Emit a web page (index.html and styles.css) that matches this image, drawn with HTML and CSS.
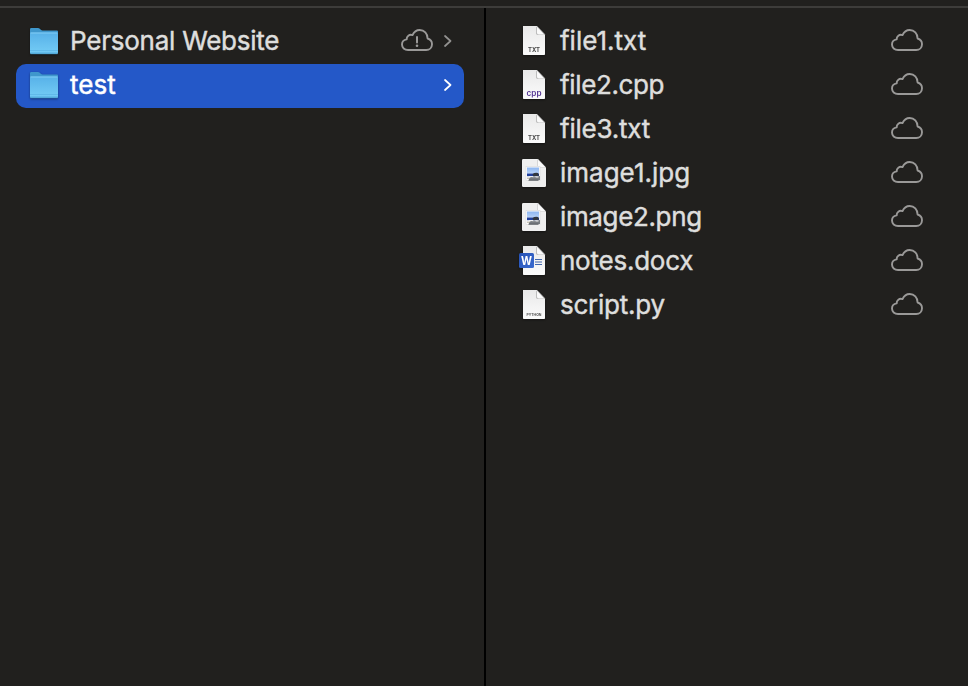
FILE: index.html
```
<!DOCTYPE html>
<html lang="en">
<head>
<meta charset="utf-8">
<title>Files</title>
<link rel="stylesheet" href="styles.css">
</head>
<body>
<svg class="defs" width="0" height="0" aria-hidden="true">
  <defs>
    <linearGradient id="paper" x1="0" y1="0" x2="0" y2="1"><stop offset="0" stop-color="#e9e9e9"/><stop offset="1" stop-color="#fbfbfb"/></linearGradient>
    <linearGradient id="front" x1="0" y1="0" x2="0" y2="1"><stop offset="0" stop-color="#57b1e8"/><stop offset="1" stop-color="#75cdf6"/></linearGradient>
    <linearGradient id="sky" x1="0" y1="0" x2="0" y2="1"><stop offset="0" stop-color="#8db6f0"/><stop offset="1" stop-color="#b7d2f8"/></linearGradient>
    <linearGradient id="word" x1="0" y1="0" x2="1" y2="1"><stop offset="0" stop-color="#2551b4"/><stop offset="1" stop-color="#3b6bd0"/></linearGradient>
    <symbol id="folder" viewBox="0 0 30 44">
      <path d="M1 33V9.200Q1 8 2.200 8H9q1 0 1.800.8l1 1q.8.800 1.800.800H28q1 0 1 1V33z" fill="#3f97cc"/>
      <path d="M1 13.700q0-1.200 1.200-1.200h25.600q1.200 0 1.200 1.200v19q0 1.300-1.200 1.300H2.200Q1 34 1 32.700z" fill="url(#front)"/>
      <path d="M1.500 13h27" stroke="#82cdf5" stroke-width="1"/>
      <path d="M1 30.500h28M1 32.500h28" stroke="#58aee0" stroke-width=".6"/>
      <path d="M1.500 33.800h27" stroke="#348abd" stroke-width=".7"/>
    </symbol>
    <symbol id="page" viewBox="0 0 30 44">
      <path d="M4 6H18l8 8.500V34.200q0 .8-.8.800H4.800Q4 35 4 34.200z" fill="url(#paper)"/>
      <path d="M17 6.500l8.500 8.500h-6.800q-1.700 0-1.700-1.700z" fill="#bdbdbd"/>
      <path d="M18 7l7.500 7.500h-5.700q-1.800 0-1.800-1.800z" fill="#fafafa"/>
      <path d="M18 6l8 8.500" stroke="#777" stroke-width=".8"/>
    </symbol>
    <symbol id="picture" viewBox="0 0 30 44">
      <path d="M4.200 7H19l8 8.500V33.800q0 1.200-1.200 1.200H4.200Q3 35 3 33.800V8.200Q3 7 4.200 7z" fill="#efefef"/>
      <path d="M18.500 7l8.500 8.500h-6.800q-1.700 0-1.700-1.700z" fill="#bdbdbd"/>
      <path d="M19 7.800l7.500 7.500h-5.700q-1.800 0-1.800-1.800z" fill="#fafafa"/>
      <rect x="7" y="14.500" width="14" height="14" fill="#fff" stroke="#d7d7d7" stroke-width=".6"/>
      <rect x="8" y="15.500" width="12" height="6" fill="url(#sky)"/>
      <path d="M8 21.500h12v2.700H8z" fill="#20409c"/>
      <path d="M8 25.500h12V27H8z" fill="#c9c5b8"/>
      <path d="M13.500 22.300q2-2 5.500-1.300l1 2.500-5.500 1z" fill="#30363e"/>
      <path d="M10 27q1-2.500 3-2t3 0 5-1v4H10z" fill="#777b80"/>
      <path d="M10 24.600h4M16.500 25h3" stroke="#f0f0f0" stroke-width="1"/>
      <path d="M9.500 28.200h10" stroke="#50545b" stroke-width="1"/>
    </symbol>
    <symbol id="cloud" viewBox="0 0 32 22">
      <path d="M7 21C3.500 21 1 18.700 1 15.600C1 12.800 3 10.800 5.700 10.400C5.400 7.300 8.400 4.900 11.500 6.100C12.900 2.900 15.500 1 18.700 1C23.200 1 26.600 4.600 26.600 9.500C29.300 10.300 31 12.500 31 15.200C31 18.500 28.500 21 25.200 21Z" fill="none" stroke="currentColor" stroke-width="1.900" stroke-linejoin="round"/>
    </symbol>
    <symbol id="chevron" viewBox="0 0 8 14"><path d="M1 2l5.500 5L1 12" fill="none" stroke="currentColor" stroke-width="1.700" stroke-linecap="round" stroke-linejoin="round"/></symbol>
  </defs>
</svg>
<div class="topbar"></div>
<main class="browser">
  <ul class="column folders">
    <li class="row">
      <svg class="icon"><use href="#folder"/></svg>
      <span class="name">Personal Website</span>
      <svg class="cloud" viewBox="0 0 32 22"><use href="#cloud"/><path d="M16 8v5.500" stroke="currentColor" stroke-width="2" stroke-linecap="round"/><circle cx="16" cy="16.800" r="1.300" fill="currentColor"/></svg>
      <svg class="chevron"><use href="#chevron"/></svg>
    </li>
    <li class="row selected">
      <svg class="icon"><use href="#folder"/></svg>
      <span class="name normal">test</span>
      <svg class="chevron"><use href="#chevron"/></svg>
    </li>
  </ul>
  <ul class="column files">
    <li class="row"><svg class="icon" viewBox="0 0 30 44"><use href="#page"/><text class="tag txt" x="15" y="32" textLength="12" lengthAdjust="spacingAndGlyphs">TXT</text></svg><span class="name normal">file1.txt</span><svg class="cloud"><use href="#cloud"/></svg></li>
    <li class="row"><svg class="icon" viewBox="0 0 30 44"><use href="#page"/><text class="tag cpp" x="15" y="31.500" textLength="15" lengthAdjust="spacingAndGlyphs">cpp</text></svg><span class="name tight">file2.cpp</span><svg class="cloud"><use href="#cloud"/></svg></li>
    <li class="row"><svg class="icon" viewBox="0 0 30 44"><use href="#page"/><text class="tag txt" x="15" y="32" textLength="12" lengthAdjust="spacingAndGlyphs">TXT</text></svg><span class="name">file3.txt</span><svg class="cloud"><use href="#cloud"/></svg></li>
    <li class="row"><svg class="icon"><use href="#picture"/></svg><span class="name normal">image1.jpg</span><svg class="cloud"><use href="#cloud"/></svg></li>
    <li class="row"><svg class="icon"><use href="#picture"/></svg><span class="name tight">image2.png</span><svg class="cloud"><use href="#cloud"/></svg></li>
    <li class="row"><svg class="icon" viewBox="0 0 30 44"><use href="#page"/><path d="M16 19.500h7M16 22h7M16 24.500h7" stroke="#4267ad" stroke-width="1"/><rect x="0" y="13" width="15" height="15" rx="1.500" fill="url(#word)"/><text class="tag word" x="7.500" y="24.800" textLength="11" lengthAdjust="spacingAndGlyphs">W</text></svg><span class="name">notes.docx</span><svg class="cloud"><use href="#cloud"/></svg></li>
    <li class="row"><svg class="icon" viewBox="0 0 30 44"><use href="#page"/><text class="tag py" x="15" y="32" textLength="15" lengthAdjust="spacingAndGlyphs">PYTHON</text></svg><span class="name">script.py</span><svg class="cloud"><use href="#cloud"/></svg></li>
  </ul>
</main>
</body>
</html>
```
FILE: styles.css
```
* { box-sizing: border-box; }
body {
  margin: 0;
  height: 686px;
  display: flex;
  flex-direction: column;
  overflow: hidden;
  background: #21201e;
  color: #dededd;
  font: 400 26px/44px Inter, "Liberation Sans", sans-serif;
}
.defs { position: absolute; }
.topbar { height: 8px; border-bottom: 2px solid #3d3c3a; }
.browser { flex: 1; display: grid; grid-template-columns: 486px 1fr; }
.column { margin: 0; list-style: none; }
.folders { padding: 12px 20px 0 16px; border-right: 2px solid #000; }
.files { padding: 12px 45px 0 33px; }
.row { display: flex; align-items: flex-start; height: 44px; }
.folders .row { padding: 0 12px 0 13px; border-radius: 10px; }
.selected { background: #2458c8; color: #fff; }
.icon { width: 30px; height: 44px; flex: none; filter: drop-shadow(0 1px 1px #0006); }
.name { flex: 1; margin: -1px 0 0 11px; white-space: nowrap; letter-spacing: -.24px; -webkit-text-stroke: .45px; }
.name.normal { letter-spacing: 0; }
.name.tight { letter-spacing: -.36px; }
.cloud { width: 32px; height: 22px; margin-top: 9px; flex: none; color: #9a9998; }
.chevron { width: 8px; height: 14px; margin: 14px 0 0 11px; flex: none; color: #929190; }
.selected .chevron { color: #fff; }
.tag { text-anchor: middle; font-family: Inter, sans-serif; }
.txt { font-size: 5.500px; font-weight: 700; fill: #484848; }
.cpp { font-size: 8px; font-weight: 600; fill: #543594; }
.py { font-size: 3.800px; font-weight: 700; fill: #555; }
.word { font-size: 12px; font-weight: 700; fill: #fff; }
```
